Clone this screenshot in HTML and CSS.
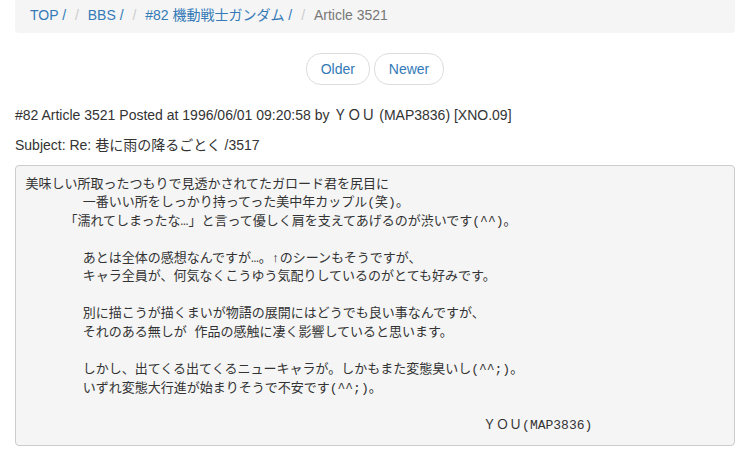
FILE: index.html
```html
<!DOCTYPE html>
<html lang="ja">
<head>
  <meta charset="UTF-8" />
  <title>Article 3521 - #82 機動戦士ガンダム</title>
  <link rel="stylesheet" href="styles.css">
</head>
<body>
  <div class="container">
    <ol class="breadcrumb">
      <li><a href="#">TOP /</a></li>
      <li><a href="#">BBS /</a></li>
      <li><a href="#">#82 機動戦士ガンダム /</a></li>
      <li class="active">Article 3521</li>
    </ol>

    <ul class="pager">
      <li><a href="#">Older</a></li>
      <li><a href="#">Newer</a></li>
    </ul>

    <p>#82 Article 3521 Posted at 1996/06/01 09:20:58 by ＹＯＵ (MAP3836) [XNO.09]</p>
    <p>Subject: Re: 巷に雨の降るごとく /3517</p>

<pre class="article">美味しい所取ったつもりで見透かされてたガロード君を尻目に
&#9;一番いい所をしっかり持ってった美中年カップル(笑)。
     「濡れてしまったな…」と言って優しく肩を支えてあげるのが渋いです(^^)。

&#9;あとは全体の感想なんですが…。↑のシーンもそうですが、
&#9;キャラ全員が、何気なくこうゆう気配りしているのがとても好みです。

&#9;別に描こうが描くまいが物語の展開にはどうでも良い事なんですが、
&#9;それのある無しが 作品の感触に凄く影響していると思います。

&#9;しかし、出てくる出てくるニューキャラが。しかもまた変態臭いし(^^;)。
&#9;いずれ変態大行進が始まりそうで不安です(^^;)。

&#9;&#9;&#9;&#9;&#9;&#9;&#9;&#9;ＹＯＵ(MAP3836)</pre>
  </div>
</body>
</html>
```

FILE: styles.css
```css
body {
  margin: 0;
  font-family: "Liberation Sans", "Noto Sans CJK JP", sans-serif;
  font-size: 14px;
  line-height: 20px;
  color: #333;
  background: #fff;
}

a {
  color: #337ab7;
  text-decoration: none;
}

.container {
  width: 720px;
  padding: 0 15px;
}

.breadcrumb {
  margin: -3px 0 20px;
  padding: 8px 15px;
  list-style: none;
  background-color: #f5f5f5;
  border-radius: 4px;
}

.breadcrumb li {
  display: inline-block;
}

.breadcrumb li + li:before {
  content: "/\00a0";
  padding: 0 5px;
  color: #ccc;
}

.breadcrumb .active {
  color: #777;
}

.pager {
  margin: 20px 0;
  padding: 0;
  list-style: none;
  text-align: center;
}

.pager li {
  display: inline;
}

.pager li a {
  display: inline-block;
  padding: 5px 14px;
  background: #fff;
  border: 1px solid #ddd;
  border-radius: 15px;
}

p {
  margin: 0 0 10px;
}

.article {
  margin: 0 0 10px;
  padding: 9.5px;
  font-family: "Liberation Mono", "Noto Sans CJK JP", monospace;
  font-size: 13px;
  line-height: 1.42857;
  color: #333;
  background-color: #f5f5f5;
  border: 1px solid #ccc;
  border-radius: 4px;
  white-space: pre;
  tab-size: 57.2px;
}
```
